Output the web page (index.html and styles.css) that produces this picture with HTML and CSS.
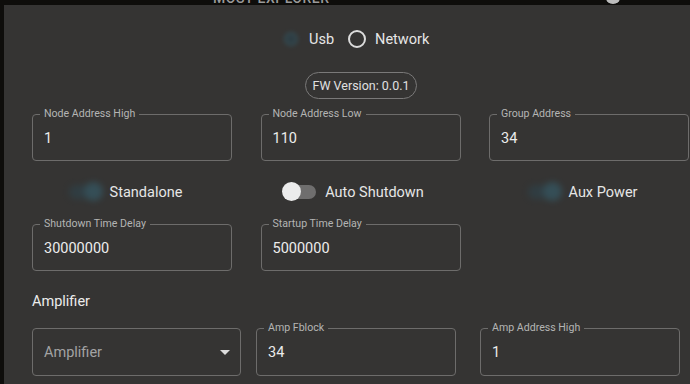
FILE: index.html
```html
<!DOCTYPE html>
<html lang="en">
  <head>
    <meta charset="UTF-8" />
    <meta name="viewport" content="width=device-width, initial-scale=1.0" />
    <title>Device Settings</title>
    <link rel="stylesheet" href="styles.css">
  </head>
  <body>
    <div class="topbar">
      <span class="topTitle">MOST EXPLORER</span>
      <span class="topIcon"></span>
    </div>
    <div class="dialog">
      <div class="radioRow">
        <span class="radio radioOn"></span>
        <span class="radioText">Usb</span>
        <span class="radio"></span>
        <span class="radioText">Network</span>
      </div>
      <div class="chipRow">
        <span class="chip">FW Version: 0.0.1</span>
      </div>
      <div class="grid3">
        <fieldset class="field">
          <legend>Node Address High</legend>
          <div class="value">1</div>
        </fieldset>
        <fieldset class="field">
          <legend>Node Address Low</legend>
          <div class="value">110</div>
        </fieldset>
        <fieldset class="field">
          <legend>Group Address</legend>
          <div class="value">34</div>
        </fieldset>
      </div>
      <div class="grid3 switchRow">
        <label class="switchItem">
          <span class="switch switchOn"><span class="thumb"></span></span>
          Standalone
        </label>
        <label class="switchItem">
          <span class="switch"><span class="thumb"></span></span>
          Auto Shutdown
        </label>
        <label class="switchItem">
          <span class="switch switchOn"><span class="thumb"></span></span>
          Aux Power
        </label>
      </div>
      <div class="grid3">
        <fieldset class="field">
          <legend>Shutdown Time Delay</legend>
          <div class="value">30000000</div>
        </fieldset>
        <fieldset class="field">
          <legend>Startup Time Delay</legend>
          <div class="value">5000000</div>
        </fieldset>
      </div>
      <h4 class="section">Amplifier</h4>
      <div class="ampRow">
        <div class="select">
          <span class="placeholder">Amplifier</span>
          <span class="caret"></span>
        </div>
        <fieldset class="field ampField">
          <legend>Amp Fblock</legend>
          <div class="value">34</div>
        </fieldset>
        <fieldset class="field ampField ampLast">
          <legend>Amp Address High</legend>
          <div class="value">1</div>
        </fieldset>
      </div>
    </div>
  </body>
</html>
```
FILE: styles.css
```css
body {
  margin: 0;
  background: #0e0d0b;
  font-family: Roboto, "Liberation Sans", sans-serif;
  color: #e6e6e6;
  overflow: hidden;
  height: 384px;
}
.topbar {
  height: 5px;
  overflow: hidden;
  display: flex;
  padding-left: 213px;
}
.topTitle {
  margin-top: -9px;
  font-size: 14px;
  line-height: 14px;
  font-weight: 500;
  letter-spacing: 0.5px;
  color: #9a9a9a;
}
.topIcon {
  margin-left: 276px;
  margin-top: -8px;
  width: 14px;
  height: 12px;
  border-radius: 50%;
  background: #bdbdbd;
}
.dialog {
  margin-left: 4px;
  height: 379px;
  background: #353433;
  padding: 22px 0 0 28px;
  box-sizing: border-box;
}
.radioRow {
  display: flex;
  align-items: center;
  height: 24px;
  padding-left: 250px;
  font-size: 14.5px;
}
.radio {
  width: 14px;
  height: 14px;
  border: 2px solid #dcdcdc;
  border-radius: 50%;
}
.radioOn {
  width: 10px;
  height: 10px;
  margin: 0 2px;
  border-color: #33606f;
  background: #2a4550;
  filter: blur(2px);
  opacity: 0.55;
}
.radioText {
  margin-left: 9px;
  margin-right: 14px;
}
.chipRow {
  display: flex;
  padding-left: 273px;
  margin-top: 21px;
}
.chip {
  height: 25px;
  width: 110px;
  border: 1px solid #7a7979;
  border-radius: 14px;
  font-size: 12.5px;
  line-height: 25px;
  text-align: center;
  color: #e0e0e0;
}
.grid3 {
  display: grid;
  grid-template-columns: 200px 200px 200px;
  column-gap: 28.5px;
  margin-top: 9px;
}
.field {
  margin: 0;
  padding: 9px 11px 11px;
  border: 1px solid #6d6c6b;
  border-radius: 4px;
  min-width: 0;
}
.field legend {
  font-size: 10.6px;
  line-height: 12px;
  padding: 0 4px;
  margin-left: -4px;
  color: #b4b4b4;
}
.value {
  font-size: 14.5px;
  line-height: 20px;
  color: #ececec;
}
.switchRow {
  margin-top: 19px;
  height: 24px;
  margin-bottom: 14px;
}
.switchItem {
  display: flex;
  align-items: center;
  justify-content: center;
  padding-right: 13px;
  font-size: 14.5px;
}
.switch {
  position: relative;
  width: 32px;
  height: 14px;
  border-radius: 7px;
  background: #6f6e6e;
  margin-right: 9px;
}
.thumb {
  position: absolute;
  left: -2px;
  top: -3px;
  width: 19px;
  height: 19px;
  border-radius: 50%;
  background: #ececec;
}
.switchOn {
  background: #2d434c;
  filter: blur(3px);
  opacity: 0.6;
}
.switchOn .thumb {
  left: auto;
  right: -2px;
  background: #35606f;
}
.section {
  margin: 21px 0 0;
  font-size: 14.5px;
  font-weight: 400;
  line-height: 20px;
  color: #ececec;
}
.ampRow {
  display: flex;
  margin-top: 10px;
}
.select {
  margin-top: 6px;
  width: 209px;
  height: 48px;
  box-sizing: border-box;
  border: 1px solid #6d6c6b;
  border-radius: 4px;
  display: flex;
  align-items: center;
  justify-content: space-between;
  padding: 0 10px 0 11px;
}
.ampField {
  width: 200px;
  box-sizing: border-box;
  margin-left: 15px;
}
.ampLast {
  margin-left: 24px;
}
.placeholder {
  font-size: 14.5px;
  color: #a3a3a3;
}
.caret {
  width: 0;
  height: 0;
  border-left: 5px solid transparent;
  border-right: 5px solid transparent;
  border-top: 5px solid #dcdcdc;
}
```
